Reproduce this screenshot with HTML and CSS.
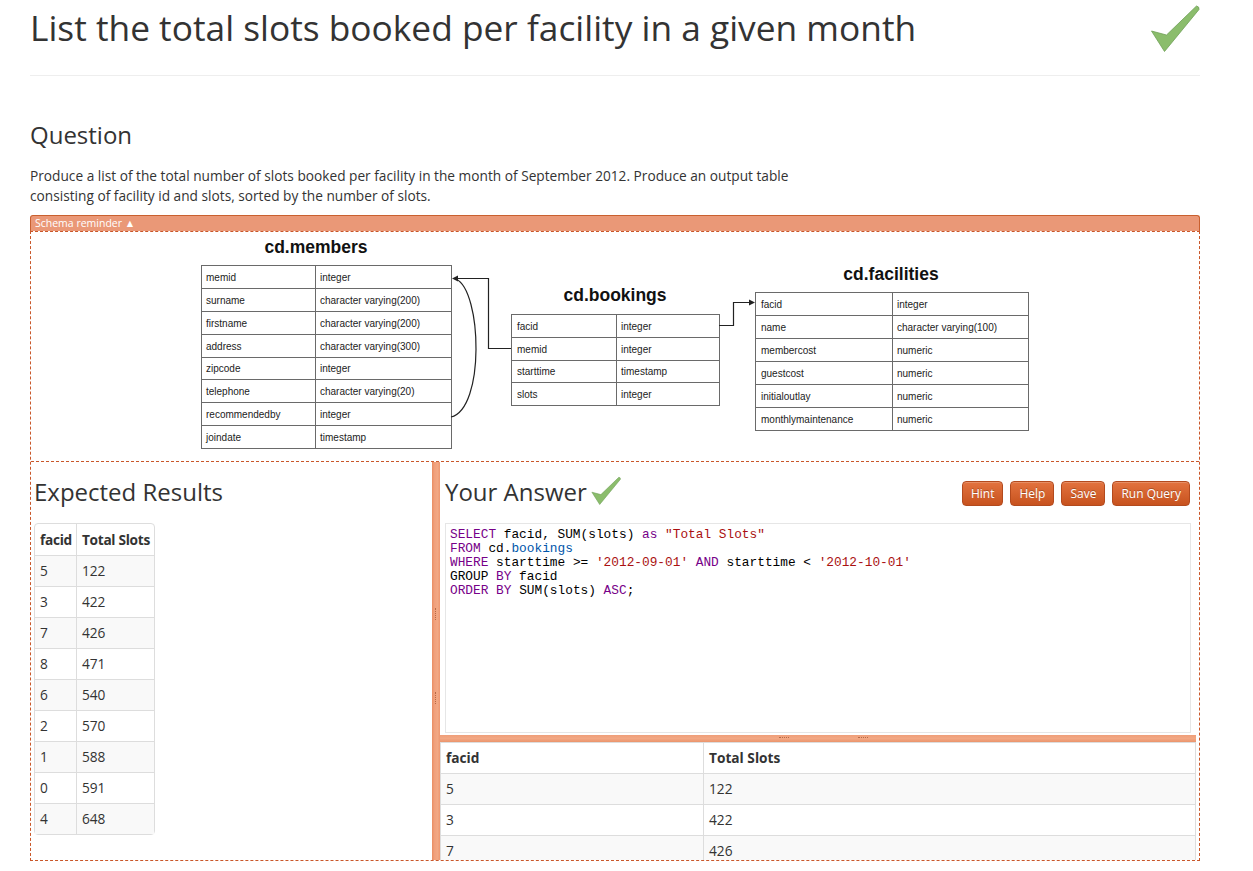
FILE: index.html
```html
<!DOCTYPE html>
<html>
<head>
<meta charset="utf-8">
<link rel="stylesheet" href="styles.css">
</head>
<body>
<div class="page">
  <header class="title-bar">
    <h1>List the total slots booked per facility in a given month</h1>
    <svg class="big-check" viewBox="0 0 50 50" width="50" height="50"><path d="M1.5,27 L16.5,31 L46.5,2 Q49.5,2.5 49,5.5 L14.5,47.5 Z" fill="#8bbd6c" stroke="#6f9f57" stroke-width="0.8" stroke-linejoin="round"/></svg>
  </header>

  <h3 class="section-title">Question</h3>
  <p class="question">Produce a list of the total number of slots booked per facility in the month of September 2012. Produce an output table consisting of facility id and slots, sorted by the number of slots.</p>

  <div class="schema-toggle">Schema reminder ▲</div>
  <div class="workspace">
    <div class="schema">
      <svg class="diagram" viewBox="31 233 1168 229" width="1168" height="229">
        <g class="titles">
          <text x="316" y="254" text-anchor="middle">cd.members</text>
          <text x="615" y="302" text-anchor="middle">cd.bookings</text>
          <text x="891" y="281" text-anchor="middle">cd.facilities</text>
        </g>
        <g class="grid">
          <rect x="201.5" y="266.5" width="250" height="183"/>
          <line x1="315.5" y1="266.5" x2="315.5" y2="449.5"/>
          <line x1="201.5" y1="289.5" x2="451.5" y2="289.5"/>
          <line x1="201.5" y1="312.5" x2="451.5" y2="312.5"/>
          <line x1="201.5" y1="335.5" x2="451.5" y2="335.5"/>
          <line x1="201.5" y1="358.5" x2="451.5" y2="358.5"/>
          <line x1="201.5" y1="380.5" x2="451.5" y2="380.5"/>
          <line x1="201.5" y1="403.5" x2="451.5" y2="403.5"/>
          <line x1="201.5" y1="426.5" x2="451.5" y2="426.5"/>

          <rect x="511.5" y="315.5" width="208" height="91"/>
          <line x1="616.5" y1="315.5" x2="616.5" y2="406.5"/>
          <line x1="511.5" y1="338.5" x2="719.5" y2="338.5"/>
          <line x1="511.5" y1="361.5" x2="719.5" y2="361.5"/>
          <line x1="511.5" y1="383.5" x2="719.5" y2="383.5"/>

          <rect x="755.5" y="293.5" width="273" height="138"/>
          <line x1="892.5" y1="293.5" x2="892.5" y2="431.5"/>
          <line x1="755.5" y1="316.5" x2="1028.5" y2="316.5"/>
          <line x1="755.5" y1="339.5" x2="1028.5" y2="339.5"/>
          <line x1="755.5" y1="362.5" x2="1028.5" y2="362.5"/>
          <line x1="755.5" y1="385.5" x2="1028.5" y2="385.5"/>
          <line x1="755.5" y1="408.5" x2="1028.5" y2="408.5"/>
        </g>
        <g class="links">
          <path d="M511,349.5 H488.5 V279.5 H456"/>
          <path d="M719,326.5 H733.5 V303.5 H751"/>
          <path d="M451,418 C485,410 482,292 456,280"/>
        </g>
        <g class="heads">
          <path d="M452,279.5 L458,276.5 L458,282.5 Z"/>
          <path d="M755,303.5 L749,300.5 L749,306.5 Z"/>
        </g>
        <g class="cells">
          <text x="206" y="282">memid</text><text x="320" y="282">integer</text>
          <text x="206" y="305">surname</text><text x="320" y="305">character varying(200)</text>
          <text x="206" y="328">firstname</text><text x="320" y="328">character varying(200)</text>
          <text x="206" y="351">address</text><text x="320" y="351">character varying(300)</text>
          <text x="206" y="373">zipcode</text><text x="320" y="373">integer</text>
          <text x="206" y="396">telephone</text><text x="320" y="396">character varying(20)</text>
          <text x="206" y="419">recommendedby</text><text x="320" y="419">integer</text>
          <text x="206" y="442">joindate</text><text x="320" y="442">timestamp</text>

          <text x="517" y="331">facid</text><text x="621" y="331">integer</text>
          <text x="517" y="354">memid</text><text x="621" y="354">integer</text>
          <text x="517" y="376">starttime</text><text x="621" y="376">timestamp</text>
          <text x="517" y="399">slots</text><text x="621" y="399">integer</text>

          <text x="761" y="309">facid</text><text x="897" y="309">integer</text>
          <text x="761" y="332">name</text><text x="897" y="332">character varying(100)</text>
          <text x="761" y="355">membercost</text><text x="897" y="355">numeric</text>
          <text x="761" y="378">guestcost</text><text x="897" y="378">numeric</text>
          <text x="761" y="401">initialoutlay</text><text x="897" y="401">numeric</text>
          <text x="761" y="424">monthlymaintenance</text><text x="897" y="424">numeric</text>
        </g>
      </svg>
    </div>

    <div class="panes">
      <section class="expected">
        <h2 class="pane-title">Expected Results</h2>
        <table class="results compact">
          <thead><tr><th class="c1">facid</th><th class="c2">Total Slots</th></tr></thead>
          <tbody>
            <tr><td>5</td><td>122</td></tr>
            <tr><td>3</td><td>422</td></tr>
            <tr><td>7</td><td>426</td></tr>
            <tr><td>8</td><td>471</td></tr>
            <tr><td>6</td><td>540</td></tr>
            <tr><td>2</td><td>570</td></tr>
            <tr><td>1</td><td>588</td></tr>
            <tr><td>0</td><td>591</td></tr>
            <tr><td>4</td><td>648</td></tr>
          </tbody>
        </table>
      </section>

      <div class="vsplit"><span class="grip g1"></span><span class="grip g2"></span></div>

      <section class="answer">
        <div class="answer-head">
          <h2 class="pane-title">Your Answer <svg class="small-check" viewBox="0 0 50 50" width="30" height="30"><path d="M1.5,27 L16.5,31 L46.5,2 Q49.5,2.5 49,5.5 L14.5,47.5 Z" fill="#8bbd6c" stroke="#6f9f57" stroke-width="1" stroke-linejoin="round"/></svg></h2>
          <div class="buttons">
            <button class="btn">Hint</button>
            <button class="btn">Help</button>
            <button class="btn">Save</button>
            <button class="btn">Run Query</button>
          </div>
        </div>
        <div class="editor">
<pre class="code"><span class="kw">SELECT</span> facid, SUM(slots) <span class="kw">as</span> <span class="str">"Total Slots"</span>
<span class="kw">FROM</span> cd.<span class="var">bookings</span>
<span class="kw">WHERE</span> starttime &gt;= <span class="str">'2012-09-01'</span> <span class="kw">AND</span> starttime &lt; <span class="str">'2012-10-01'</span>
GROUP <span class="kw">BY</span> facid
<span class="kw">ORDER</span> <span class="kw">BY</span> SUM(slots) <span class="kw">ASC</span>;</pre>
        </div>
        <div class="hsplit"><span class="hgrip h1"></span><span class="hgrip h2"></span></div>
        <table class="results wide">
          <thead><tr><th class="w1">facid</th><th>Total Slots</th></tr></thead>
          <tbody>
            <tr><td>5</td><td>122</td></tr>
            <tr><td>3</td><td>422</td></tr>
            <tr><td>7</td><td>426</td></tr>
          </tbody>
        </table>
      </section>
    </div>
  </div>
</div>
</body>
</html>
```

FILE: styles.css
```css
html, body {
  margin: 0;
  padding: 0;
  background: #fff;
}
body {
  font-family: "Open Sans", "Noto Sans", sans-serif;
  font-size: 13.7px;
  line-height: 20px;
  color: #333;
}
.page {
  margin-left: 30px;
  width: 1170px;
}
.title-bar {
  display: flex;
  justify-content: space-between;
  align-items: flex-start;
  height: 76px;
  box-sizing: border-box;
  border-bottom: 1px solid #eee;
}
.title-bar h1 {
  margin: 0;
  padding-top: 6px;
  font-size: 35.3px;
  line-height: 42px;
  font-weight: 400;
  color: #333;
}
.big-check {
  margin-top: 4px;
}
.section-title {
  margin: 44px 0 0;
  font-size: 24px;
  line-height: 30px;
  font-weight: 400;
}
.question {
  margin: 16px 0 9px;
  max-width: 800px;
}
.schema-toggle {
  height: 16px;
  box-sizing: border-box;
  background: #ea9877;
  border: 1px solid #c9602f;
  border-bottom: none;
  border-radius: 3px 3px 0 0;
  color: #fff;
  font-size: 10.5px;
  line-height: 14px;
  padding-left: 4px;
}
.workspace {
  border: 1px dashed #c9572a;
  height: 630px;
  box-sizing: border-box;
  overflow: hidden;
}
.schema {
  height: 229px;
  border-bottom: 1px dashed #c9572a;
}
.diagram {
  display: block;
}
.diagram .titles text {
  font-family: "Liberation Sans", Arial, sans-serif;
  font-weight: 700;
  font-size: 17.5px;
  fill: #111;
}
.diagram .cells text {
  font-family: "Liberation Sans", Arial, sans-serif;
  font-size: 10px;
  fill: #222;
}
.diagram .grid rect,
.diagram .grid line {
  fill: none;
  stroke: #6a6a6a;
  stroke-width: 1;
}
.diagram .links path {
  fill: none;
  stroke: #222;
  stroke-width: 1.2;
}
.diagram .heads path {
  fill: #222;
}
.panes {
  display: flex;
  height: 398px;
}
.expected {
  width: 401px;
  padding-left: 3px;
  box-sizing: border-box;
}
.pane-title {
  margin: 0;
  font-size: 24px;
  line-height: 30px;
  font-weight: 400;
  color: #333;
  display: flex;
  align-items: center;
  gap: 6px;
}
.expected .pane-title {
  padding-top: 15px;
  padding-bottom: 15px;
}
.vsplit {
  width: 8px;
  flex: none;
  background: linear-gradient(to right, #e98d63, #f0a07c 30%, #f2a884 70%, #ec9670);
  position: relative;
}
.grip {
  position: absolute;
  left: 3px;
  width: 1px;
  height: 12px;
  border-left: 1px dotted #b66a46;
}
.g1 { top: 146px; }
.g2 { top: 230px; }
.answer {
  width: 759px;
  padding-right: 3px;
  box-sizing: border-box;
  overflow: hidden;
}
.answer-head {
  display: flex;
  justify-content: space-between;
  align-items: center;
  height: 61px;
  padding: 0 6px 0 5px;
  box-sizing: border-box;
}
.answer-head .pane-title {
  margin-top: -1px;
}
.small-check {
  margin-top: -2px;
  margin-left: -2px;
}
.buttons {
  display: flex;
  gap: 7px;
  margin-top: 2px;
}
.btn {
  font-family: "Open Sans", "Noto Sans", sans-serif;
  font-size: 12px;
  line-height: 16px;
  color: #fff;
  text-shadow: 0 -1px 0 rgba(0,0,0,0.25);
  height: 25px;
  padding: 0 8px;
  border: 1px solid #b34a1e;
  border-radius: 4px;
  background: linear-gradient(to bottom, #e3733f, #c7521e);
  box-shadow: inset 0 1px 0 rgba(255,255,255,0.2);
}
.editor {
  margin: 0 5px;
  height: 210px;
  border: 1px solid #e6e6e6;
  box-sizing: border-box;
  padding: 4px 4px;
}
.code {
  margin: 0;
  font-family: "Liberation Mono", "DejaVu Sans Mono", monospace;
  font-size: 12.8px;
  line-height: 14px;
  color: #000;
}
.kw { color: #708; }
.str { color: #a11; }
.var { color: #05a; }
.hsplit {
  margin-top: 2px;
  height: 7px;
  width: 756px;
  background: linear-gradient(to bottom, #ef9e79, #f2a884 50%, #eb946c);
  position: relative;
}
.hgrip {
  position: absolute;
  top: 2px;
  width: 10px;
  border-top: 1px dotted #b66a46;
}
.h1 { left: 339px; }
.h2 { left: 418px; }
.results {
  border-collapse: separate;
  border-spacing: 0;
  border: 1px solid #ddd;
  font-size: 13.7px;
  line-height: 20px;
  color: #333;
}
.results th,
.results td {
  padding: 5px 5px;
  text-align: left;
  white-space: nowrap;
  border-top: 1px solid #ddd;
  border-left: 1px solid #ddd;
}
.results th {
  border-top: none;
  font-weight: 700;
  padding-top: 6px;
}
.compact {
  margin-top: 1px;
}
.compact th {
  letter-spacing: -0.3px;
  padding-right: 4px;
}
.results th:first-child,
.results td:first-child {
  border-left: none;
}
.results tbody tr:nth-child(odd) td {
  background: #f9f9f9;
}
.compact {
  border-radius: 4px;
}
.compact .c1 { width: 31px; }
.compact .c2 { width: 68px; }
.wide {
  width: 756px;
  border-bottom: none;
}
.wide th {
  padding-top: 5px;
}
.wide .w1 { width: 252px; }
```
